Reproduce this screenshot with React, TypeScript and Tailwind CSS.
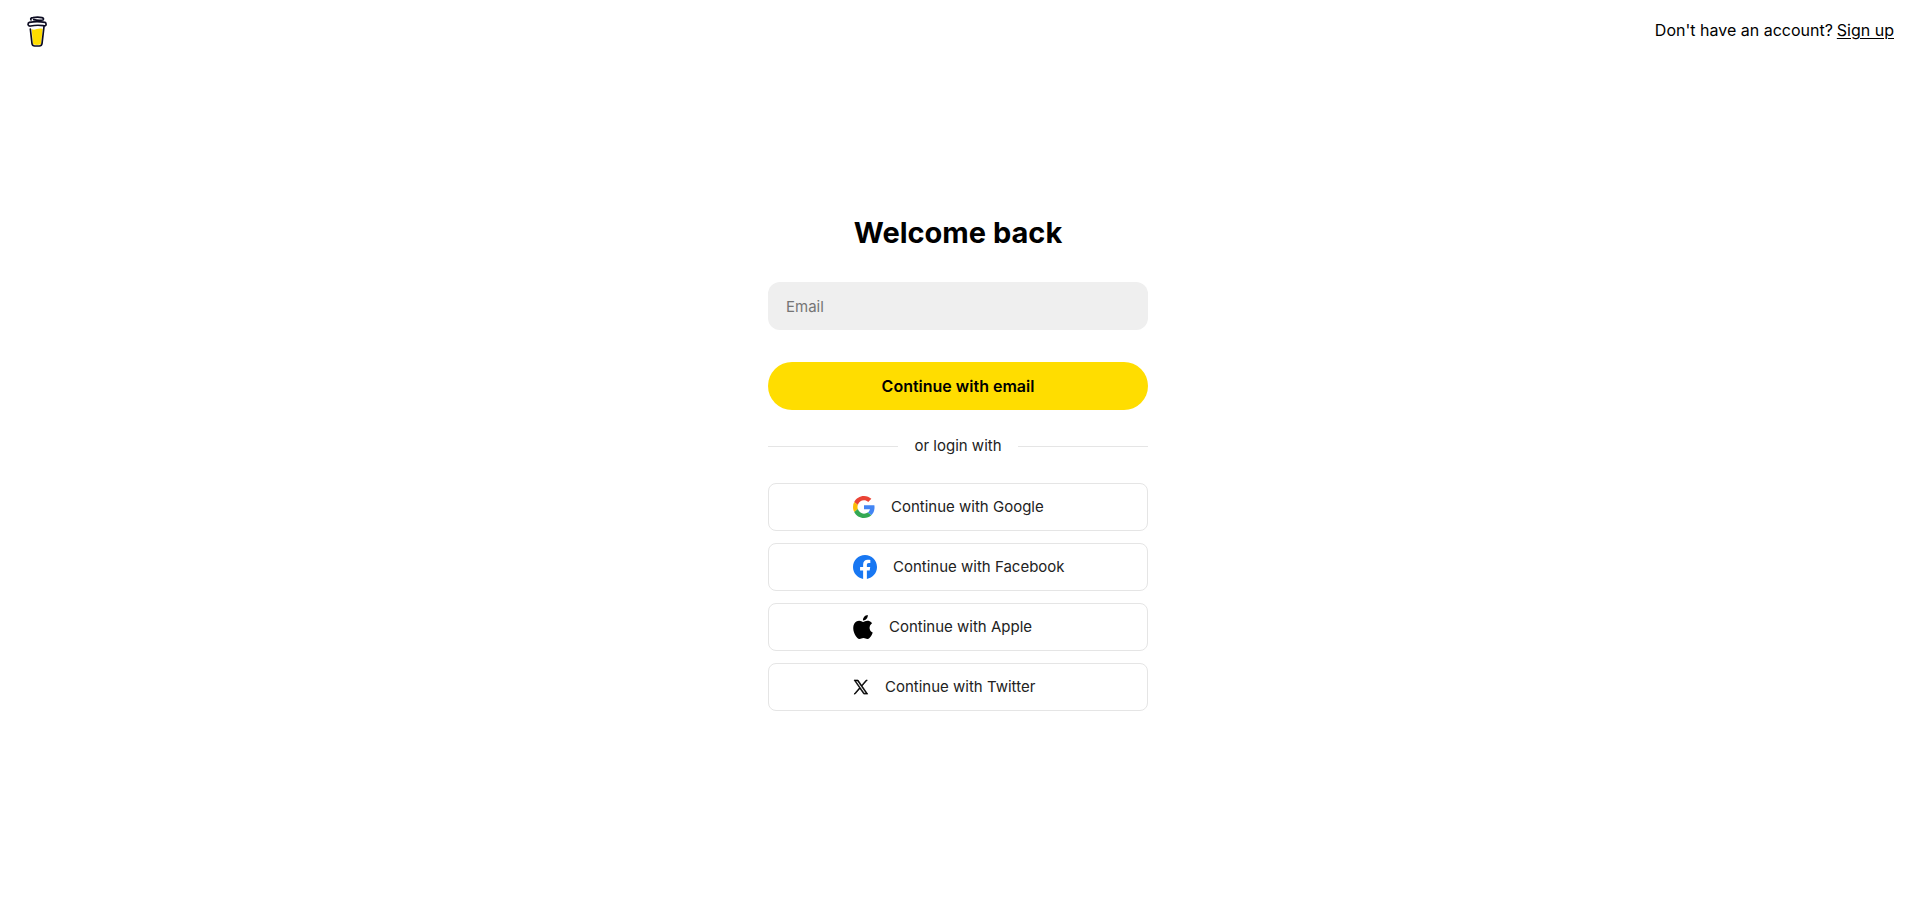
import type { ReactNode } from "react";

function CoffeeLogo() {
  return (
    <svg viewBox="0 0 60 93" className="h-[31px] w-5" fill="none" aria-hidden="true">
      <path d="M14 39 C23 46 32 34 47 39 L42 85 Q30 89 18 85 Z" fill="#FFDD00" />
      <g stroke="#0D0C22" strokeWidth="5" strokeLinecap="round" strokeLinejoin="round">
        <path d="M12 12 Q9 6 18 5 Q32 2 45 5 Q52 7 48 12 Q34 14 20 11" />
        <path d="M7 19 Q30 15 54 19 Q58 21 57 27 Q54 31 49 29 Q30 26 11 30 Q4 31 3 26 Q3 20 7 19 Z" />
        <path d="M10 39 L15 83 Q16 90 23 90 L37 90 Q44 90 45 83 L51 32" />
      </g>
    </svg>
  );
}

function GoogleIcon() {
  return (
    <svg viewBox="0 0 48 48" className="size-[22px]" aria-hidden="true">
      <path fill="#EA4335" d="M24 9.5c3.54 0 6.71 1.22 9.21 3.6l6.85-6.85C35.9 2.38 30.47 0 24 0 14.62 0 6.51 5.38 2.56 13.22l7.98 6.19C12.43 13.72 17.74 9.5 24 9.5z" />
      <path fill="#4285F4" d="M46.98 24.55c0-1.57-.15-3.09-.38-4.55H24v9.02h12.94c-.58 2.96-2.26 5.48-4.78 7.18l7.73 6c4.51-4.18 7.09-10.36 7.09-17.65z" />
      <path fill="#FBBC05" d="M10.53 28.59c-.48-1.45-.76-2.99-.76-4.59s.27-3.14.76-4.59l-7.98-6.19C.92 16.46 0 20.12 0 24c0 3.88.92 7.54 2.56 10.78l7.97-6.19z" />
      <path fill="#34A853" d="M24 48c6.48 0 11.93-2.13 15.89-5.81l-7.73-6c-2.15 1.45-4.92 2.3-8.16 2.3-6.26 0-11.57-4.22-13.47-9.91l-7.98 6.19C6.51 42.62 14.62 48 24 48z" />
    </svg>
  );
}

function FacebookIcon() {
  return (
    <svg viewBox="0 0 24 24" className="size-6" fill="#1877F2" aria-hidden="true">
      <path d="M24 12.073c0-6.627-5.373-12-12-12s-12 5.373-12 12c0 5.99 4.388 10.954 10.125 11.854v-8.385H7.078v-3.47h3.047V9.43c0-3.007 1.792-4.669 4.533-4.669 1.312 0 2.686.235 2.686.235v2.953H15.83c-1.491 0-1.956.925-1.956 1.874v2.25h3.328l-.532 3.47h-2.796v8.385C19.612 23.027 24 18.062 24 12.073z" />
    </svg>
  );
}

function AppleIcon() {
  return (
    <svg viewBox="2 0 20 24" className="h-6 w-5" aria-hidden="true">
      <path d="M12.152 6.896c-.948 0-2.415-1.078-3.96-1.04-2.04.027-3.91 1.183-4.961 3.014-2.117 3.675-.546 9.103 1.519 12.09 1.013 1.454 2.208 3.09 3.792 3.039 1.52-.065 2.09-.987 3.935-.987 1.831 0 2.35.987 3.96.948 1.637-.026 2.676-1.48 3.676-2.948 1.156-1.688 1.636-3.325 1.662-3.415-.039-.013-3.182-1.221-3.22-4.857-.026-3.04 2.48-4.494 2.597-4.559-1.429-2.09-3.623-2.324-4.39-2.376-2-.156-3.675 1.09-4.61 1.09zM15.53 3.83c.843-1.012 1.4-2.427 1.245-3.83-1.207.052-2.662.805-3.532 1.818-.78.896-1.454 2.338-1.273 3.714 1.338.104 2.715-.688 3.559-1.701" />
    </svg>
  );
}

function XIcon() {
  return (
    <svg viewBox="0 0 16 16" className="size-4" aria-hidden="true">
      <path
        transform="translate(1 1) scale(.0115)"
        stroke="#000"
        strokeWidth="55"
        d="M714.163 519.284L1160.89 0H1055.03L667.137 450.887L357.328 0H0L468.492 681.821L0 1226.37H105.866L515.491 750.218L842.672 1226.37H1200L714.137 519.284H714.163ZM569.165 687.828L521.697 619.934L144.011 79.6944H306.615L611.412 515.685L658.88 583.579L1055.08 1150.3H892.476L569.165 687.854V687.828Z"
      />
    </svg>
  );
}

const providers: { name: string; icon: ReactNode }[] = [
  { name: "Google", icon: <GoogleIcon /> },
  { name: "Facebook", icon: <FacebookIcon /> },
  { name: "Apple", icon: <AppleIcon /> },
  { name: "Twitter", icon: <XIcon /> },
];

export default function App() {
  return (
    <div className="min-h-screen bg-white font-['Inter',sans-serif] text-black">
      <header className="flex items-start justify-between pt-4 pr-6 pl-[27px]">
        <a href="#home" aria-label="Home">
          <CoffeeLogo />
        </a>
        <p className="flex gap-1 text-base leading-7">
          Don't have an account?
          <a href="#signup" className="underline underline-offset-2">
            Sign up
          </a>
        </p>
      </header>
      <main className="flex justify-center pt-[166px] pr-[18px] pb-16 pl-4">
        <div className="w-full max-w-[380px]">
          <h1 className="text-center text-[29px] leading-10 font-bold">Welcome back</h1>
          <form className="mt-[29px]" onSubmit={(e) => e.preventDefault()}>
            <input
              type="email"
              aria-label="Email"
              placeholder="Email"
              className="block h-12 w-full rounded-xl bg-[#efefef] px-[18px] text-[15px] outline-none placeholder:text-[#757575]"
            />
            <button type="submit" className="mt-8 h-12 w-full rounded-full bg-[#ffdd00] text-base font-semibold">
              Continue with email
            </button>
          </form>
          <div className="mt-6 mb-[25px] flex items-center gap-4 text-[15px] leading-6 text-[#222222]">
            <span className="h-px flex-1 bg-[#e5e5e5]" />
            or login with
            <span className="h-px flex-1 bg-[#e5e5e5]" />
          </div>
          <div className="flex flex-col gap-3">
            {providers.map(({ name, icon }) => (
              <button
                key={name}
                type="button"
                className="flex h-12 items-center gap-4 rounded-lg border border-[#e5e5e5] pl-[84px] text-[15px] text-[#222222]"
              >
                {icon}
                Continue with {name}
              </button>
            ))}
          </div>
        </div>
      </main>
    </div>
  );
}
